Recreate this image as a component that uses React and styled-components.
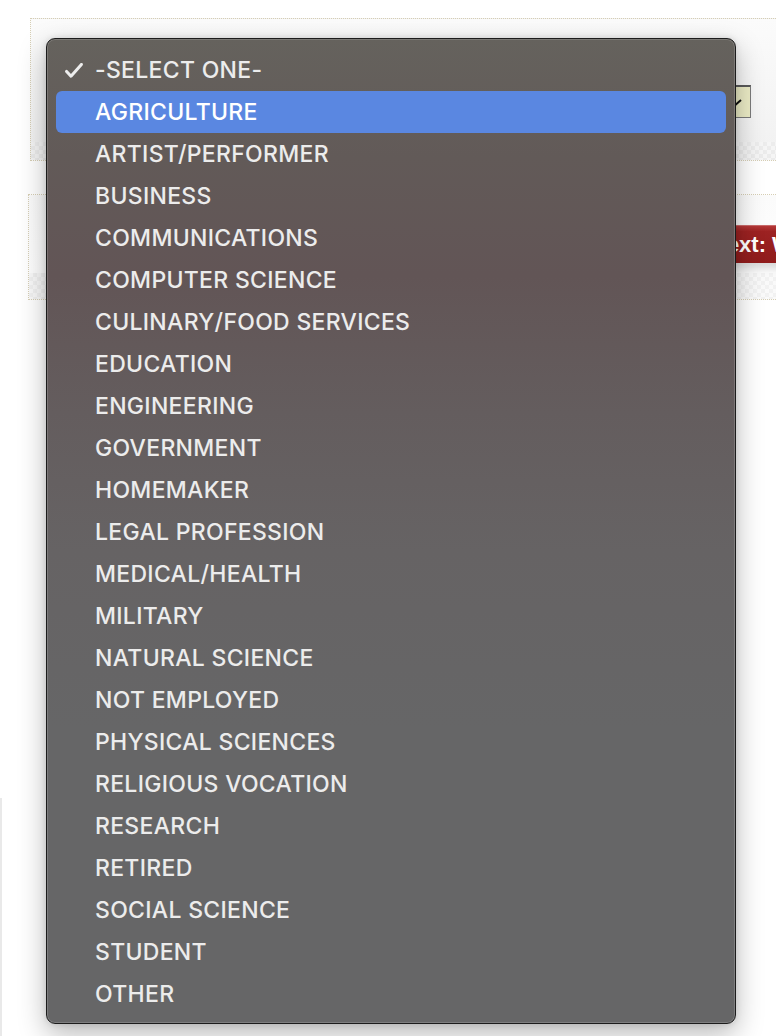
import styled, { createGlobalStyle } from "styled-components";

const GlobalStyle = createGlobalStyle`
  html, body {
    margin: 0;
    padding: 0;
    background: #ffffff;
    overflow: hidden;
    font-family: "Liberation Sans", Arial, sans-serif;
  }
`;

const occupations = [
  "AGRICULTURE",
  "ARTIST/PERFORMER",
  "BUSINESS",
  "COMMUNICATIONS",
  "COMPUTER SCIENCE",
  "CULINARY/FOOD SERVICES",
  "EDUCATION",
  "ENGINEERING",
  "GOVERNMENT",
  "HOMEMAKER",
  "LEGAL PROFESSION",
  "MEDICAL/HEALTH",
  "MILITARY",
  "NATURAL SCIENCE",
  "NOT EMPLOYED",
  "PHYSICAL SCIENCES",
  "RELIGIOUS VOCATION",
  "RESEARCH",
  "RETIRED",
  "SOCIAL SCIENCE",
  "STUDENT",
  "OTHER",
];

export default function App() {
  return (
    <Page>
      <GlobalStyle />
      <Form>
        <FieldBox>
          <FieldRow>
            <SelectStub>
              <svg width="14" height="14" viewBox="0 0 14 14">
                <path d="M1 12 L9 5" stroke="#111" strokeWidth="2" />
              </svg>
            </SelectStub>
          </FieldRow>
        </FieldBox>
        <NavBox>
          <NavRow>
            <NextButton>Next: W</NextButton>
          </NavRow>
        </NavBox>
        <Footer />
      </Form>

      <Menu>
        <Item>
          <Check viewBox="0 0 18 15">
            <path
              d="M1.6 8.4 L6 13.2 L16.4 1.4"
              fill="none"
              stroke="#ededed"
              strokeWidth="3"
              strokeLinecap="round"
              strokeLinejoin="round"
            />
          </Check>
          -SELECT ONE-
        </Item>
        {occupations.map((name, i) => (
          <Item key={name} active={i === 0}>
            {name}
          </Item>
        ))}
      </Menu>
    </Page>
  );
}

const Page = styled.div`
  position: relative;
  width: 776px;
  height: 1036px;
  overflow: hidden;
  background: #ffffff;
`;

const Form = styled.div`
  display: flex;
  flex-direction: column;
  padding-top: 18px;
`;

const checkerBand = `
  repeating-conic-gradient(#e9e9e9 0% 25%, #f6f6f6 0% 50%) 0 0 / 8px 8px
`;

const FieldBox = styled.div`
  margin-left: 30px;
  margin-right: -4px;
  height: 141px;
  border: 1px dotted #d6ceb4;
  background: linear-gradient(to bottom, #fbfbfb 0%, #f1f1f1 100%);
  position: relative;
  &::after {
    content: "";
    position: absolute;
    left: 0;
    right: 0;
    bottom: 0;
    height: 18px;
    background: ${checkerBand};
    opacity: 0.7;
  }
`;

const FieldRow = styled.div`
  display: flex;
  justify-content: flex-end;
  padding: 66px 28px 0 0;
`;

const SelectStub = styled.div`
  width: 90px;
  height: 33px;
  background: #ececc6;
  border: 1px solid #7a7a7a;
  border-top: 2px solid #5a5a5a;
  display: flex;
  align-items: center;
  justify-content: flex-end;
  padding-right: 4px;
  box-sizing: border-box;
`;

const NavBox = styled.div`
  margin-top: 33px;
  margin-left: 28px;
  margin-right: -4px;
  height: 104px;
  border: 1px dotted #d6ceb4;
  background: linear-gradient(to bottom, #fbfbfb 0%, #ffffff 100%);
  position: relative;
  &::after {
    content: "";
    position: absolute;
    left: 0;
    right: 0;
    bottom: 0;
    height: 26px;
    background: ${checkerBand};
    opacity: 0.6;
  }
`;

const NavRow = styled.div`
  display: flex;
  padding: 30px 0 0 673px;
`;

const NextButton = styled.div`
  white-space: nowrap;
  height: 37px;
  padding: 0 12px 0 9px;
  display: flex;
  align-items: center;
  background: linear-gradient(to bottom, #b53838 0%, #9d2222 15%, #8f1c1c 100%);
  border-top: 1px solid #c86a6a;
  color: #ffffff;
  font-family: "Liberation Sans", Arial, sans-serif;
  font-weight: bold;
  font-size: 22px;
  box-shadow: 0 6px 8px rgba(0, 0, 0, 0.15);
`;

const Footer = styled.div`
  margin-top: 498px;
  height: 240px;
  width: 2px;
  background: #e9e9e9;
`;

const Menu = styled.div`
  position: absolute;
  left: 46px;
  top: 38px;
  width: 690px;
  height: 986px;
  box-sizing: border-box;
  padding: 10px 9px 8px;
  display: flex;
  flex-direction: column;
  border: 1px solid #1c1c1c;
  border-radius: 9px;
  background: linear-gradient(
    to bottom,
    #65625d 0%,
    #625a58 12%,
    #625556 24%,
    #645d5e 38%,
    #666364 52%,
    #666667 70%,
    #666667 100%
  );
  box-shadow:
    inset 0 0 0 1px rgba(255, 255, 255, 0.16),
    0 10px 28px rgba(0, 0, 0, 0.28),
    0 0 6px rgba(0, 0, 0, 0.12);
`;

const Item = styled.div`
  position: relative;
  height: 42px;
  flex: none;
  display: flex;
  align-items: center;
  padding-left: 39px;
  box-sizing: border-box;
  border-radius: 6px;
  color: ${(p) => (p.active ? "#ffffff" : "#ececec")};
  background: ${(p) => (p.active ? "#5a87e1" : "transparent")};
  font-family: Inter, "Liberation Sans", Arial, sans-serif;
  font-size: 23px;
  font-weight: 500;
  letter-spacing: 0.3px;
  white-space: nowrap;
`;

const Check = styled.svg`
  position: absolute;
  left: 9px;
  top: 14px;
  width: 18px;
  height: 15px;
`;
